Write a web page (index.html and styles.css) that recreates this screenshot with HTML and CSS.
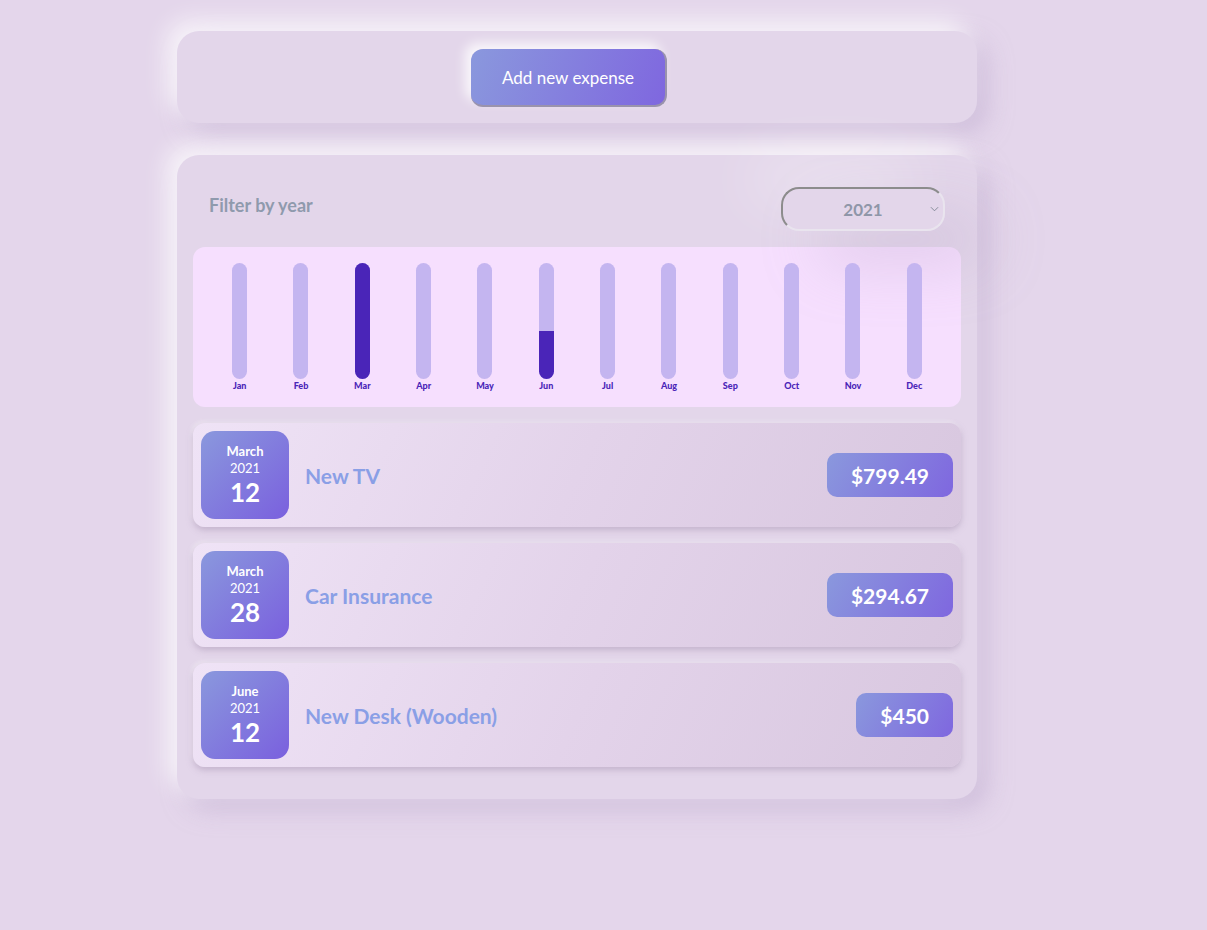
FILE: index.html
```html
<!DOCTYPE html>
<html lang="en">
<head>
  <meta charset="utf-8">
  <meta name="viewport" content="width=device-width,initial-scale=1">
  <title>Expenses</title>
  <link rel="stylesheet" href="styles.css">
</head>
<body>
  <div class="app">
    <div class="card new-expense">
      <button class="add-button" type="button">Add new expense</button>
    </div>

    <div class="card expenses">
      <div class="filter">
        <label class="filter-label" for="year">Filter by year</label>
        <div class="select-wrap">
          <select id="year" class="year-select">
            <option>2022</option>
            <option selected>2021</option>
            <option>2020</option>
            <option>2019</option>
          </select>
          <svg class="chevron" viewBox="0 0 10 6" width="9" height="6"><path d="M1 1l4 4 4-4" fill="none" stroke="#7c8591" stroke-width="1"/></svg>
        </div>
      </div>

      <div class="chart">
        <div class="chart-bar"><div class="bar-inner"><div class="bar-fill" style="height: 0%"></div></div><span class="bar-label">Jan</span></div>
        <div class="chart-bar"><div class="bar-inner"><div class="bar-fill" style="height: 0%"></div></div><span class="bar-label">Feb</span></div>
        <div class="chart-bar"><div class="bar-inner"><div class="bar-fill" style="height: 100%"></div></div><span class="bar-label">Mar</span></div>
        <div class="chart-bar"><div class="bar-inner"><div class="bar-fill" style="height: 0%"></div></div><span class="bar-label">Apr</span></div>
        <div class="chart-bar"><div class="bar-inner"><div class="bar-fill" style="height: 0%"></div></div><span class="bar-label">May</span></div>
        <div class="chart-bar"><div class="bar-inner"><div class="bar-fill" style="height: 41%"></div></div><span class="bar-label">Jun</span></div>
        <div class="chart-bar"><div class="bar-inner"><div class="bar-fill" style="height: 0%"></div></div><span class="bar-label">Jul</span></div>
        <div class="chart-bar"><div class="bar-inner"><div class="bar-fill" style="height: 0%"></div></div><span class="bar-label">Aug</span></div>
        <div class="chart-bar"><div class="bar-inner"><div class="bar-fill" style="height: 0%"></div></div><span class="bar-label">Sep</span></div>
        <div class="chart-bar"><div class="bar-inner"><div class="bar-fill" style="height: 0%"></div></div><span class="bar-label">Oct</span></div>
        <div class="chart-bar"><div class="bar-inner"><div class="bar-fill" style="height: 0%"></div></div><span class="bar-label">Nov</span></div>
        <div class="chart-bar"><div class="bar-inner"><div class="bar-fill" style="height: 0%"></div></div><span class="bar-label">Dec</span></div>
      </div>

      <ul class="expense-list">
        <li class="expense-item">
          <div class="expense-date">
            <span class="date-month">March</span>
            <span class="date-year">2021</span>
            <span class="date-day">12</span>
          </div>
          <h2 class="expense-title">New TV</h2>
          <div class="expense-price">$799.49</div>
        </li>
        <li class="expense-item">
          <div class="expense-date">
            <span class="date-month">March</span>
            <span class="date-year">2021</span>
            <span class="date-day">28</span>
          </div>
          <h2 class="expense-title">Car Insurance</h2>
          <div class="expense-price">$294.67</div>
        </li>
        <li class="expense-item">
          <div class="expense-date">
            <span class="date-month">June</span>
            <span class="date-year">2021</span>
            <span class="date-day">12</span>
          </div>
          <h2 class="expense-title">New Desk (Wooden)</h2>
          <div class="expense-price">$450</div>
        </li>
      </ul>
    </div>
  </div>
</body>
</html>
```

FILE: styles.css
```css
*, :after, :before {
  box-sizing: border-box;
}

html {
  font-family: Lato, "Open Sans", sans-serif;
}

body {
  margin: 0;
  min-height: 100vh;
  background-color: #e4d6eb;
}

.app {
  width: 800px;
  margin: 31px 0 0 177px;
  display: flex;
  flex-direction: column;
  gap: 32px;
}

.card {
  background-color: #e3d6ea;
  border-radius: 22px;
  box-shadow: -10px -10px 24px rgba(255, 255, 255, 0.75), 10px 10px 24px rgba(190, 170, 205, 0.55);
}

.new-expense {
  height: 92px;
  display: flex;
  align-items: center;
  justify-content: center;
}

.add-button {
  width: 196px;
  height: 58px;
  margin: 2px 0 0 -16px;
  border: 0;
  border-right: 2px solid #9a93ac;
  border-bottom: 2px solid #9a93ac;
  border-radius: 12px;
  background: linear-gradient(110deg, #8a98dd 0%, #7f67df 100%);
  color: #fff;
  font-family: inherit;
  font-size: 17px;
  box-shadow: -6px -6px 12px rgba(255, 255, 255, 0.8);
}

.expenses {
  padding: 32px 16px;
}

.filter {
  display: flex;
  align-items: center;
  justify-content: space-between;
  padding: 0 16px;
  margin-bottom: 16px;
}

.filter-label {
  margin-top: -8px;
  color: #8f9aad;
  font-size: 18px;
  font-weight: bold;
}

.select-wrap {
  position: relative;
  border-radius: 18px;
  box-shadow: -30px -30px 60px rgba(255, 255, 255, 0.35), 40px 30px 60px rgba(180, 160, 195, 0.35);
}

.year-select {
  display: block;
  width: 164px;
  height: 44px;
  border: 2px solid;
  border-color: #8c8c8c #e9e4ee #e9e4ee #8c8c8c;
  border-radius: 18px;
  background-color: #e3d6ea;
  color: #8f96a8;
  font-family: inherit;
  font-size: 17px;
  font-weight: bold;
  text-align: center;
  text-align-last: center;
  appearance: none;
  -webkit-appearance: none;
}

.chevron {
  position: absolute;
  top: 19px;
  right: 6px;
}

.chart {
  display: grid;
  grid-template-columns: repeat(12, 1fr);
  height: 160px;
  padding: 16px;
  border-radius: 12px;
  background-color: #f6dffe;
}

.chart-bar {
  display: flex;
  flex-direction: column;
  align-items: center;
}

.bar-inner {
  position: relative;
  width: 15px;
  height: 116px;
  border-radius: 8px;
  background-color: #c4b5f0;
  overflow: hidden;
}

.bar-fill {
  position: absolute;
  left: 0;
  right: 0;
  bottom: 0;
  background-color: #4a25b8;
}

.bar-label {
  margin-top: 1px;
  color: #4a25b8;
  font-size: 9px;
  font-weight: 900;
  line-height: 12px;
}

.expense-list {
  list-style: none;
  margin: 16px 0 0;
  padding: 0;
  display: flex;
  flex-direction: column;
  gap: 16px;
}

.expense-item {
  display: flex;
  align-items: center;
  height: 104px;
  padding: 8px;
  border-radius: 12px;
  background: linear-gradient(115deg, #efe3f6 0%, #e3d3ea 50%, #d8c7df 100%);
  box-shadow: 0 3px 6px rgba(170, 150, 180, 0.55), -2px -2px 4px rgba(255, 255, 255, 0.4);
}

.expense-date {
  display: flex;
  flex-direction: column;
  align-items: center;
  justify-content: center;
  width: 88px;
  height: 88px;
  border-radius: 14px;
  background: linear-gradient(135deg, #8a98dd 0%, #7a60de 100%);
  color: #fff;
}

.date-month {
  font-size: 13px;
  font-weight: bold;
  line-height: 17px;
}

.date-year {
  font-size: 13px;
  line-height: 17px;
}

.date-day {
  font-size: 26px;
  font-weight: bold;
  line-height: 30px;
}

.expense-title {
  flex: 1;
  margin: 0 0 0 16px;
  color: #8a9fe6;
  font-size: 21px;
  font-weight: bold;
}

.expense-price {
  display: flex;
  align-items: center;
  height: 44px;
  padding: 0 24px;
  border-radius: 10px;
  background: linear-gradient(120deg, #8a98dd 0%, #7f67df 100%);
  color: #fff;
  font-size: 21px;
  font-weight: bold;
}
```
